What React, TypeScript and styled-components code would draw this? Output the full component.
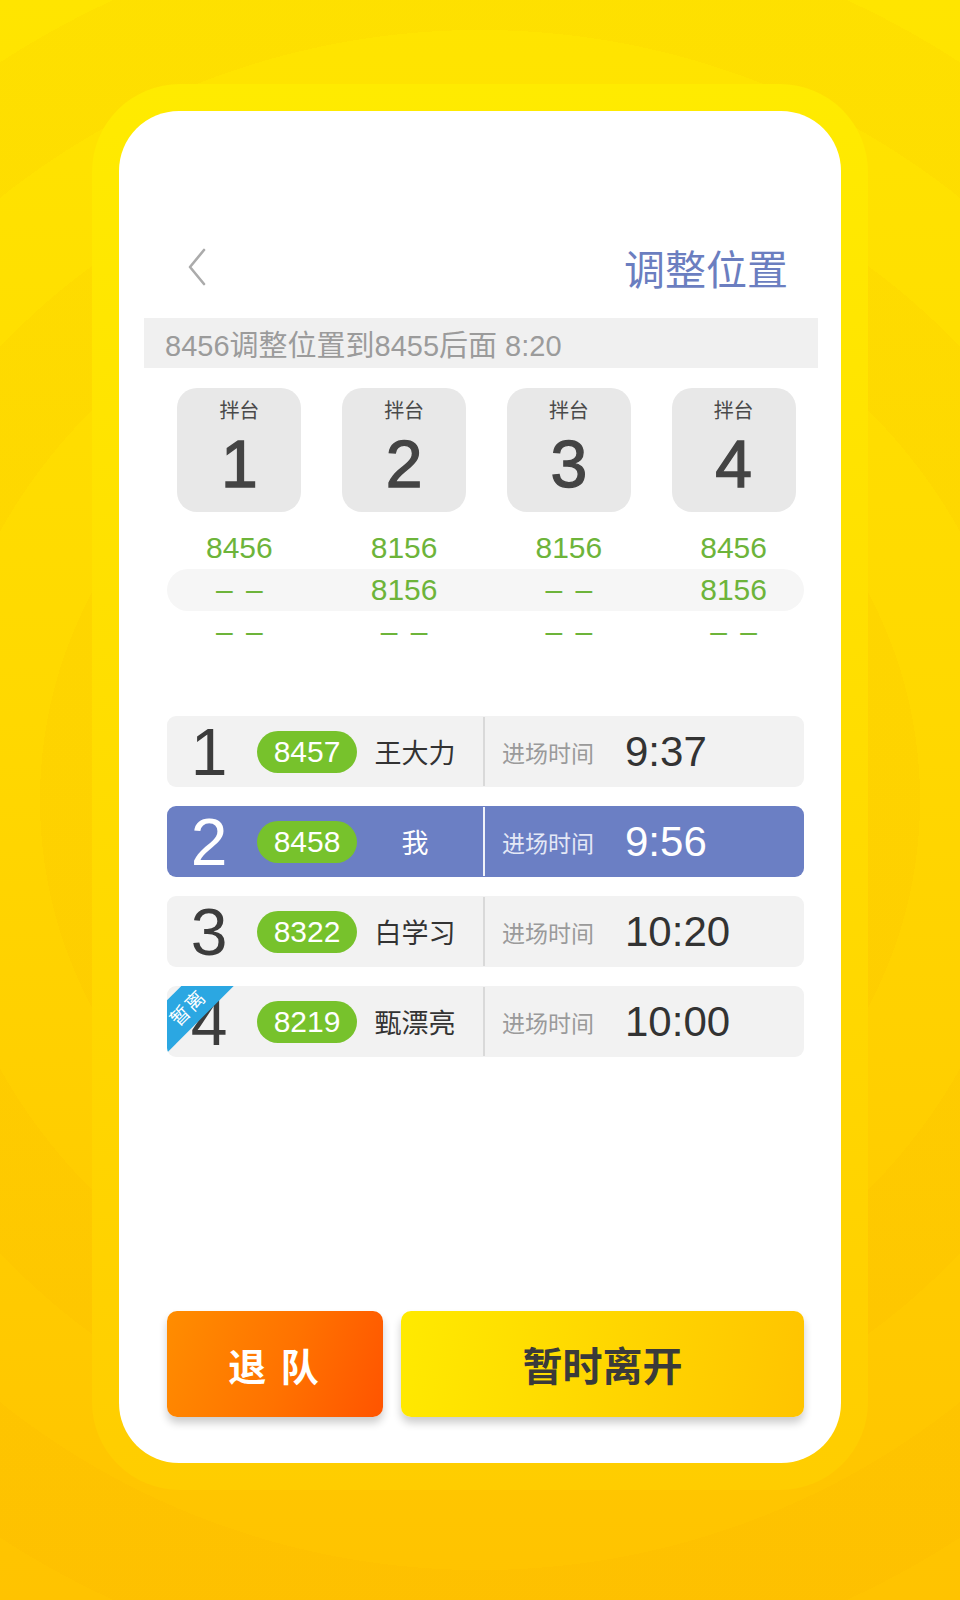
import React from "react";
import styled, { createGlobalStyle } from "styled-components";

const GlobalStyle = createGlobalStyle`
  html, body {
    margin: 0;
    padding: 0;
  }
  body {
    font-family: "Liberation Sans", "Noto Sans CJK SC", sans-serif;
  }
  * { box-sizing: border-box; }
`;

const Page = styled.div`
  width: 960px;
  height: 1600px;
  padding-top: 84px;
  background:
    repeating-radial-gradient(circle at 50% 50%, rgba(255, 170, 0, 0) 0 110px, rgba(240, 150, 0, 0.06) 110px 220px),
    linear-gradient(180deg, #ffe500 0%, #ffd800 45%, #ffc300 100%);
  overflow: hidden;
`;

const Frame = styled.div`
  width: 776px;
  margin: 0 auto;
  padding: 27px;
  border-radius: 88px;
  background: linear-gradient(180deg, #ffeb00 0%, #ffdc00 50%, #ffcd00 100%);
`;

const Card = styled.div`
  width: 722px;
  height: 1352px;
  background: #ffffff;
  border-radius: 60px;
  display: flex;
  flex-direction: column;
  padding-top: 128px;
  padding-bottom: 46px;
`;

const Header = styled.div`
  height: 56px;
  display: flex;
  align-items: center;
  justify-content: space-between;
  padding: 0 53px 0 69px;
`;

const Title = styled.div`
  font-family: "Noto Sans CJK SC", sans-serif;
  font-size: 41px;
  color: #6b7ec0;
  line-height: 56px;
`;

const Notice = styled.div`
  margin: 23px 23px 0 25px;
  height: 50px;
  background: #f0f0f0;
  display: flex;
  align-items: center;
  padding-left: 21px;
  font-size: 29px;
  color: #9b9b9b;
`;

const ColumnGrid = styled.div`
  display: grid;
  grid-template-columns: repeat(4, 1fr);
  justify-items: center;
`;

const Tiles = styled(ColumnGrid)`
  margin: 20px 25px 0 38px;
`;

const Tile = styled.div`
  width: 124px;
  height: 124px;
  border-radius: 20px;
  background: #e8e8e8;
  display: flex;
  flex-direction: column;
  align-items: center;
  padding-top: 10px;
  color: #444444;
`;

const TileLabel = styled.div`
  font-family: "Noto Sans CJK SC", sans-serif;
  font-size: 20px;
  line-height: 24px;
  color: #4a4a4a;
`;

const TileNumber = styled.div`
  font-size: 66px;
  line-height: 66px;
  margin-top: 9px;
  -webkit-text-stroke: 1.4px #444444;
`;

const Numbers = styled.div`
  margin: 15px 25px 0 38px;
  display: flex;
  flex-direction: column;
`;

const NumberBand = styled.div<{ $shaded?: boolean }>`
  margin: 0 12px 0 10px;
  border-radius: 21px;
  background: ${(p) => (p.$shaded ? "#f6f6f6" : "transparent")};
`;

const NumberRow = styled(ColumnGrid)`
  margin: 0 -12px 0 -10px;
  height: 42px;
  line-height: 42px;
  font-size: 30px;
  color: #6db43a;
`;

const Dash = styled.span`
  word-spacing: 5px;
`;

const Queue = styled.div`
  margin: 63px 37px 0 48px;
  display: flex;
  flex-direction: column;
  gap: 19px;
`;

const Row = styled.div<{ $me?: boolean }>`
  position: relative;
  height: 71px;
  border-radius: 9px;
  display: flex;
  align-items: center;
  background: ${(p) => (p.$me ? "#6b7fc4" : "#f2f2f2")};
  color: ${(p) => (p.$me ? "#ffffff" : "#333333")};
`;

const Index = styled.div<{ $me?: boolean }>`
  width: 84px;
  text-align: center;
  font-size: 66px;
  line-height: 66px;
  color: ${(p) => (p.$me ? "#ffffff" : "#3c3c3c")};
`;

const Pill = styled.div`
  margin-left: 6px;
  width: 100px;
  height: 42px;
  border-radius: 21px;
  background: #77c22c;
  color: #ffffff;
  font-size: 30px;
  line-height: 42px;
  text-align: center;
`;

const Name = styled.div`
  width: 116px;
  text-align: center;
  font-family: "Noto Sans CJK SC", sans-serif;
  font-size: 27px;
`;

const Divider = styled.div<{ $me?: boolean }>`
  margin-left: 10px;
  width: 2px;
  align-self: stretch;
  margin-top: 1px;
  margin-bottom: 1px;
  background: ${(p) => (p.$me ? "rgba(255,255,255,0.9)" : "#d9d9d9")};
`;

const Label = styled.div<{ $me?: boolean }>`
  margin-left: 17px;
  font-family: "Noto Sans CJK SC", sans-serif;
  font-size: 23px;
  color: ${(p) => (p.$me ? "#e4e8f6" : "#9a9a9a")};
`;

const Time = styled.div`
  margin-left: 31px;
  font-size: 42px;
`;

const RibbonCorner = styled.div`
  position: absolute;
  left: 0;
  top: 0;
  width: 90px;
  height: 71px;
  overflow: hidden;
  border-radius: 9px 0 0 9px;
  pointer-events: none;
`;

const Ribbon = styled.div`
  position: absolute;
  left: -40px;
  top: 2px;
  width: 120px;
  height: 37px;
  background: #2ba7e2;
  transform: rotate(-45deg);
  color: #ffffff;
  font-family: "Noto Sans CJK SC", sans-serif;
  font-size: 19px;
  line-height: 37px;
  text-align: center;
  letter-spacing: 2px;
`;

const Actions = styled.div`
  margin: auto 37px 0 48px;
  display: flex;
  gap: 18px;
  height: 106px;
`;

const ActionButton = styled.button<{ $variant: "quit" | "leave" }>`
  border: none;
  border-radius: 10px;
  height: 106px;
  font-family: "Noto Sans CJK SC", sans-serif;
  font-weight: 700;
  box-shadow: 0 6px 9px rgba(0, 0, 0, 0.2);
  cursor: pointer;
  ${(p) =>
    p.$variant === "quit"
      ? `
    width: 216px;
    flex: none;
    font-size: 38px;
    letter-spacing: 3px;
    color: #ffffff;
    background: linear-gradient(110deg, #ff8d00 0%, #ff7200 55%, #ff5400 100%);
  `
      : `
    flex: 1;
    font-size: 40px;
    color: #3a3a3a;
    background: linear-gradient(100deg, #ffea00 0%, #ffd700 50%, #ffc400 100%);
  `}
`;

const BackIcon = () => (
  <svg width="18" height="38" viewBox="0 0 18 38" fill="none">
    <polyline points="16,2 2,19 16,36" stroke="#ababab" strokeWidth="2.6" strokeLinecap="round" strokeLinejoin="round" />
  </svg>
);

const tables = [
  { no: 1, rows: ["8456", "", ""] },
  { no: 2, rows: ["8156", "8156", ""] },
  { no: 3, rows: ["8156", "", ""] },
  { no: 4, rows: ["8456", "8156", ""] },
];

const queue = [
  { idx: 1, code: "8457", name: "王大力", time: "9:37" },
  { idx: 2, code: "8458", name: "我", time: "9:56", me: true },
  { idx: 3, code: "8322", name: "白学习", time: "10:20" },
  { idx: 4, code: "8219", name: "甄漂亮", time: "10:00", away: true },
];

export default function App() {
  return (
    <>
      <GlobalStyle />
      <Page>
        <Frame>
          <Card>
            <Header>
              <BackIcon />
              <Title>调整位置</Title>
            </Header>
            <Notice>8456调整位置到8455后面 8:20</Notice>
            <Tiles>
              {tables.map((t) => (
                <Tile key={t.no}>
                  <TileLabel>拌台</TileLabel>
                  <TileNumber>{t.no}</TileNumber>
                </Tile>
              ))}
            </Tiles>
            <Numbers>
              {[0, 1, 2].map((r) => (
                <NumberBand key={r} $shaded={r === 1}>
                  <NumberRow>
                    {tables.map((t) => (
                      <div key={t.no}>{t.rows[r] ? t.rows[r] : <Dash>– –</Dash>}</div>
                    ))}
                  </NumberRow>
                </NumberBand>
              ))}
            </Numbers>
            <Queue>
              {queue.map((q) => (
                <Row key={q.idx} $me={q.me}>
                  <Index $me={q.me}>{q.idx}</Index>
                  <Pill>{q.code}</Pill>
                  <Name>{q.name}</Name>
                  <Divider $me={q.me} />
                  <Label $me={q.me}>进场时间</Label>
                  <Time>{q.time}</Time>
                  {q.away && (
                    <RibbonCorner>
                      <Ribbon>暂离</Ribbon>
                    </RibbonCorner>
                  )}
                </Row>
              ))}
            </Queue>
            <Actions>
              <ActionButton $variant="quit">退 队</ActionButton>
              <ActionButton $variant="leave">暂时离开</ActionButton>
            </Actions>
          </Card>
        </Frame>
      </Page>
    </>
  );
}
